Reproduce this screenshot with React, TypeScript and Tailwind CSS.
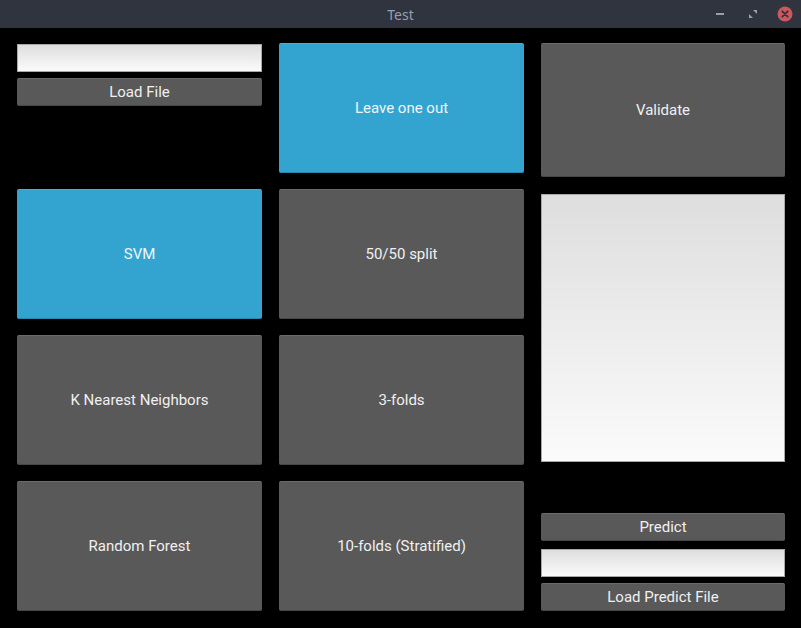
import React from "react";

const font = { fontFamily: "Roboto, 'Noto Sans', sans-serif" };

function Btn({ label, blue, className = "" }: { label: string; blue?: boolean; className?: string }) {
  return (
    <div
      className={`flex items-center justify-center rounded-[2px] text-[15px] border-t border-b ${
        blue
          ? "bg-[#33a4d0] border-t-[#3fb0da] border-b-[#2a88ad] text-[#eef6fa]"
          : "bg-[#595959] border-t-[#6b6b6b] border-b-[#474747] text-[#f0f0f0]"
      } ${className}`}
    >
      {label}
    </div>
  );
}

function Field({ className = "" }: { className?: string }) {
  return (
    <div className={`border border-[#a8a8a8] bg-gradient-to-b from-[#dedede] to-[#fbfbfb] ${className}`} />
  );
}

export default function App() {
  return (
    <div className="w-[801px] h-[628px] bg-black flex flex-col overflow-hidden" style={font}>
      <div className="h-[28px] bg-[#2f343f] relative flex items-center justify-center shrink-0">
        <span className="text-[14px] text-[#9aa0aa]" style={{ fontFamily: "'Noto Sans', sans-serif" }}>
          Test
        </span>
        <div className="absolute left-[716px] top-[13px] w-[8px] h-[2px] bg-[#9aa0aa]" />
        <svg className="absolute left-[748px] top-[9px]" width="10" height="10" viewBox="0 0 10 10">
          <path d="M5 1 H9 V5 Z" fill="#9aa0aa" />
          <path d="M1 5 V9 H5 Z" fill="#9aa0aa" />
        </svg>
        <svg className="absolute left-[777px] top-[6px]" width="16" height="16" viewBox="0 0 16 16">
          <circle cx="8" cy="8" r="7.5" fill="#cc575d" />
          <path d="M5.3 5.3 L10.7 10.7 M10.7 5.3 L5.3 10.7" stroke="#2f343f" strokeWidth="1.8" strokeLinecap="round" />
        </svg>
      </div>
      <div className="pt-[15px] pl-[17px] grid grid-cols-[245px_245px_244px] grid-rows-[130px_130px_130px_130px] gap-x-[17px] gap-y-[16px]">
        <div className="flex flex-col pt-[1px] gap-[6px]">
          <Field className="h-[28px]" />
          <Btn label="Load File" className="h-[28px]" />
        </div>
        <Btn label="Leave one out" blue />
        <div className="row-span-4 flex flex-col h-[568px]">
          <Btn label="Validate" className="h-[134px]" />
          <Field className="h-[268px] mt-[17px]" />
          <div className="flex-1" />
          <Btn label="Predict" className="h-[28px]" />
          <Field className="h-[28px] mt-[8px]" />
          <Btn label="Load Predict File" className="h-[28px] mt-[6px]" />
        </div>
        <Btn label="SVM" blue />
        <Btn label="50/50 split" />
        <Btn label="K Nearest Neighbors" />
        <Btn label="3-folds" />
        <Btn label="Random Forest" />
        <Btn label="10-folds (Stratified)" />
      </div>
    </div>
  );
}
